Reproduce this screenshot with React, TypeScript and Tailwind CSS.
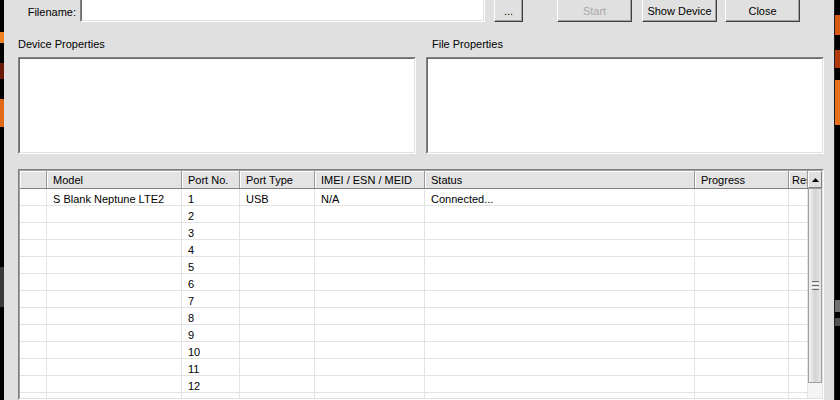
import React from "react";

const headers = [
  { label: "", cls: "w-[27px] pl-[6px]" },
  { label: "Model", cls: "w-[135px] pl-[6px]" },
  { label: "Port No.", cls: "w-[58px] pl-[6px]" },
  { label: "Port Type", cls: "w-[75px] pl-[6px]" },
  { label: "IMEI / ESN / MEID", cls: "w-[110px] pl-[6px]" },
  { label: "Status", cls: "w-[270px] pl-[6px]" },
  { label: "Progress", cls: "w-[94px] pl-[6px]" },
  { label: "Result", cls: "flex-1 pl-[3px]" },
];

const bodyCols = [
  "w-[27px]",
  "w-[135px]",
  "w-[58px]",
  "w-[75px]",
  "w-[110px]",
  "w-[270px]",
  "w-[94px]",
  "flex-1",
];

const rows: string[][] = Array.from({ length: 15 }, (_, i) =>
  i === 0
    ? ["", "S Blank Neptune LTE2", "1", "USB", "N/A", "Connected...", "", ""]
    : ["", "", String(i + 1), "", "", "", "", ""]
);

function Btn({ children, disabled, cls }: { children: React.ReactNode; disabled?: boolean; cls: string }) {
  return (
    <div
      className={`${cls} h-[26px] shrink-0 flex items-center justify-center pt-[4px] border border-t-white border-l-white border-r-[#404040] border-b-[#404040] shadow-[inset_-1px_-1px_0_#a0a0a0] bg-[#e0e0e0] leading-[13px] ${
        disabled ? "text-[#a8a8a8]" : "text-black"
      }`}
    >
      {children}
    </div>
  );
}

function Sunken({ cls, children }: { cls: string; children?: React.ReactNode }) {
  return (
    <div className={`${cls} border border-t-[#808080] border-l-[#808080] border-r-white border-b-white`}>
      <div className="w-full h-full border border-t-[#6a6a6a] border-l-[#6a6a6a] border-r-[#e0e0e0] border-b-[#e0e0e0] bg-white">
        {children}
      </div>
    </div>
  );
}

export default function App() {
  return (
    <div className="w-[840px] h-[400px] overflow-hidden flex bg-black text-[11px] leading-[13px] text-black font-['Liberation_Sans',Arial,sans-serif]">
      {/* left desktop strip */}
      <div className="w-[4px] shrink-0 flex flex-col bg-black">
        <div className="h-[32px]" />
        <div className="h-[11px] bg-[#f08020]" />
        <div className="h-[20px]" />
        <div className="h-[16px] bg-[#6a1808]" />
        <div className="h-[20px]" />
        <div className="h-[28px] bg-[#e06a18]" />
        <div className="h-[140px]" />
        <div className="h-[40px] bg-[#3a3a3a]" />
      </div>

      {/* dialog */}
      <div className="w-[830px] shrink-0 bg-[#e0e0e0] pl-[14px] pr-[10px] flex flex-col">
        {/* top row */}
        <div className="flex items-stretch h-[26px] -mt-[4px] shrink-0">
          <div className="w-[58px] shrink-0 flex items-end justify-end pb-[3px]">Filename:</div>
          <Sunken cls="ml-[4px] w-[405px] h-[26px] shrink-0" />
          <Btn cls="ml-[9px] w-[29px]">...</Btn>
          <Btn cls="ml-[34px] w-[75px]" disabled>
            Start
          </Btn>
          <Btn cls="ml-[10px] w-[75px]">Show Device</Btn>
          <Btn cls="ml-[8px] w-[75px]">Close</Btn>
        </div>

        {/* properties */}
        <div className="grid grid-cols-2 gap-[10px] mt-[16px] shrink-0">
          <div className="flex flex-col">
            <div className="h-[13px]">Device Properties</div>
            <Sunken cls="mt-[6px] h-[97px]" />
          </div>
          <div className="flex flex-col">
            <div className="h-[13px] ml-[6px]">File Properties</div>
            <Sunken cls="mt-[6px] h-[97px]" />
          </div>
        </div>

        {/* table */}
        <div className="mt-[15px] flex-1 min-h-0 border border-t-[#808080] border-l-[#808080] border-r-white border-b-white">
          <div className="h-full border border-t-[#a0a0a0] border-l-[#a0a0a0] border-r-[#e0e0e0] border-b-[#e0e0e0] bg-white flex overflow-hidden">
            <div className="flex-1 min-w-0 flex flex-col overflow-hidden">
              <div className="h-[18px] shrink-0 flex bg-[#e3e3e3] border-b border-b-[#808080]">
                {headers.map((h, i) => (
                  <div
                    key={i}
                    className={`${h.cls} shrink-0 h-full flex items-center pt-[1px] border-r border-r-[#9a9a9a] shadow-[inset_1px_1px_0_#ffffff] whitespace-nowrap overflow-hidden`}
                  >
                    {h.label}
                  </div>
                ))}
              </div>
              {rows.map((r, ri) => (
                <div key={ri} className="h-[17px] shrink-0 flex border-b border-b-[#e3e3e3]">
                  {r.map((c, ci) => (
                    <div
                      key={ci}
                      className={`${bodyCols[ci]} shrink-0 h-full pl-[6px] pt-[4px] border-r border-r-[#e3e3e3] whitespace-nowrap overflow-hidden`}
                    >
                      {c}
                    </div>
                  ))}
                </div>
              ))}
            </div>

            {/* scrollbar */}
            <div className="w-[14px] shrink-0 flex flex-col bg-[#f2f2f2]">
              <div className="h-[17px] shrink-0 flex items-center justify-center bg-[#e0e0e0] border border-t-white border-l-white border-r-[#808080] border-b-[#808080]">
                <svg width="7" height="4" viewBox="0 0 7 4">
                  <polygon points="3.5,0 7,4 0,4" fill="#000" />
                </svg>
              </div>
              <div className="h-[195px] shrink-0 flex items-center justify-center border border-[#a0a0a0] bg-linear-to-r from-[#f4f4f4] via-[#d4d4d4] to-[#e6e6e6]">
                <div className="flex flex-col gap-[1px]">
                  <div className="w-[7px] h-[1px] bg-[#707070]" />
                  <div className="w-[7px] h-[1px] bg-[#ffffff]" />
                  <div className="w-[7px] h-[1px] bg-[#707070]" />
                  <div className="w-[7px] h-[1px] bg-[#ffffff]" />
                  <div className="w-[7px] h-[1px] bg-[#707070]" />
                </div>
              </div>
              <div className="flex-1 bg-[#f4f4f4]" />
            </div>
          </div>
        </div>
      </div>

      {/* right desktop strip */}
      <div className="w-[6px] shrink-0 flex flex-col bg-black border-l border-l-[#202020]">
        <div className="h-[15px]" />
        <div className="h-[20px] bg-[#d85a10]" />
        <div className="h-[15px]" />
        <div className="h-[18px] bg-[#b03a0c]" />
        <div className="h-[12px]" />
        <div className="h-[45px] bg-[#e87018]" />
        <div className="h-[175px]" />
        <div className="h-[12px] bg-[#707070]" />
        <div className="h-[6px]" />
        <div className="h-[8px] bg-[#505050]" />
      </div>
    </div>
  );
}
